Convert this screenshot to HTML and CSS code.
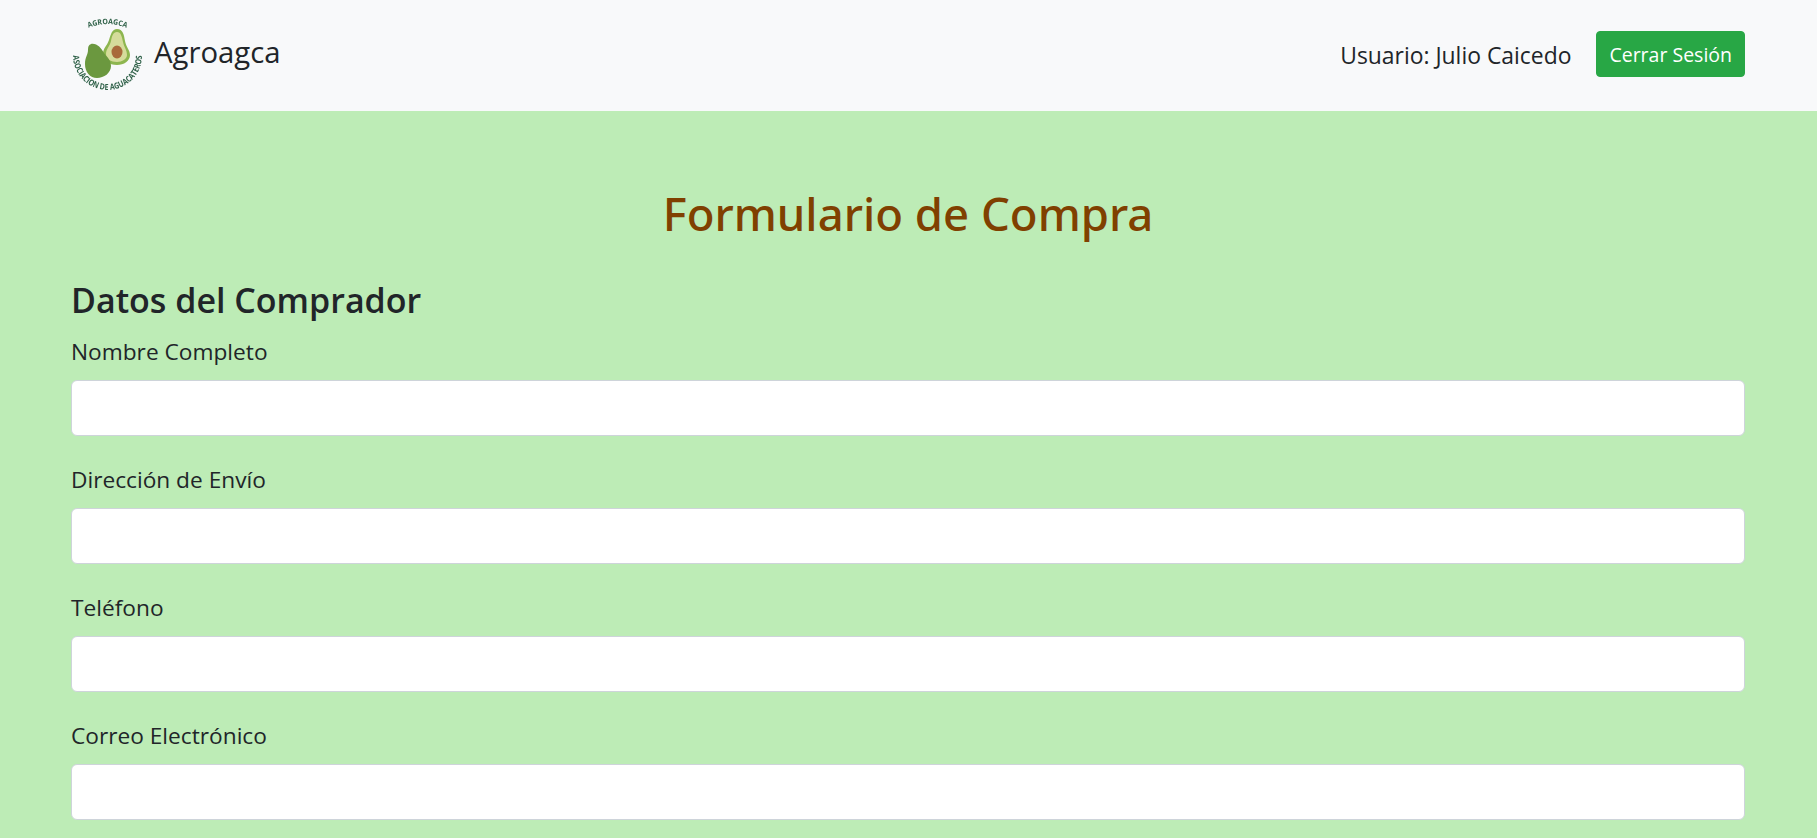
FILE: index.html
```html
<!DOCTYPE html>
<html lang="es">
<head>
    <meta charset="UTF-8">
    <meta name="viewport" content="width=device-width, initial-scale=1.0">
    <title>Formulario de Compra</title>
    <link rel="stylesheet" href="styles.css">
</head>
<body>
    <nav class="navbar">
        <a class="brand" href="#">
            <svg class="logo" viewBox="0 0 90 90" width="90" height="90">
                <defs>
                    <path id="arcTop" d="M26 19 A50 50 0 0 1 69 19"/>
                    <path id="arcBottom" d="M13 45.5 A34.5 34.5 0 0 0 82 45.5"/>
                </defs>
                <text class="logo-text"><textPath href="#arcTop" startOffset="50%" text-anchor="middle" textLength="39" lengthAdjust="spacingAndGlyphs">AGROAGCA</textPath></text>
                <text class="logo-text logo-text-low"><textPath href="#arcBottom" startOffset="50%" text-anchor="middle" textLength="108" lengthAdjust="spacingAndGlyphs">ASOCIACION DE AGUACATEROS</textPath></text>
                <path class="avo-back" d="M57 19 C63 19 64 25 65 31 C66 37 70 40 70 45 C70 51 64 55 57 55 C49 55 43 50 43 44 C43 38 47 36 49 30 C51 24 52 19 57 19 Z"/>
                <path class="avo-flesh" d="M57 22 C61 22 62 27 63 32 C64 37 67 40 67 45 C67 49 62 52 57 52 C51 52 46 49 46 44 C46 39 50 36 51 31 C52 26 53 22 57 22 Z"/>
                <ellipse class="avo-pit" cx="57" cy="42" rx="5.5" ry="6.5"/>
                <path class="avo-front" d="M31 34 C37 33 41 38 44 43 C47 47 51 50 51 56 C51 63 44 68 37 68 C30 68 25 62 25 54 C25 47 28 45 28 40 C28 36 29 35 31 34 Z"/>
            </svg>
            <span class="brand-name">Agroagca</span>
        </a>
        <div class="nav-right">
            <span class="user">Usuario: Julio Caicedo</span>
            <button class="btn-logout">Cerrar Sesión</button>
        </div>
    </nav>

    <div class="container">
        <h1>Formulario de Compra</h1>
        <h2>Datos del Comprador</h2>
        <form>
            <div class="form-group">
                <label for="nombre">Nombre Completo</label>
                <input type="text" id="nombre">
            </div>
            <div class="form-group">
                <label for="direccion">Dirección de Envío</label>
                <input type="text" id="direccion">
            </div>
            <div class="form-group">
                <label for="telefono">Teléfono</label>
                <input type="text" id="telefono">
            </div>
            <div class="form-group">
                <label for="correo">Correo Electrónico</label>
                <input type="text" id="correo">
            </div>
        </form>
    </div>
</body>
</html>
```

FILE: styles.css
```css
html, body {
    height: 100%;
}
body {
    margin: 0;
    font-family: "Open Sans", "Noto Sans", sans-serif;
    color: #212529;
    background: #bdecb6;
    overflow: hidden;
}
.navbar {
    display: flex;
    justify-content: space-between;
    align-items: center;
    height: 111px;
    padding: 0 72px 0 71px;
    background: #f8f9fa;
}
.brand {
    display: flex;
    align-items: center;
    color: #212529;
    text-decoration: none;
}
.logo {
    display: block;
    margin-left: -11px;
    margin-top: -1px;
    filter: blur(0.3px);
}
.logo-text {
    font-family: "Open Sans", sans-serif;
    font-size: 7.5px;
    font-weight: 700;
    fill: #2f6148;
}
.logo-text-low {
    font-size: 8.5px;
}
.avo-back {
    fill: #8db64f;
}
.avo-flesh {
    fill: #d5dc9b;
}
.avo-pit {
    fill: #a86a3b;
}
.avo-front {
    fill: #6b983f;
}
.brand-name {
    margin-left: 4px;
    margin-top: -7px;
    font-size: 29.3px;
}
.nav-right {
    display: flex;
    align-items: center;
    gap: 25px;
    margin-top: -3px;
}
.user {
    margin-top: 2px;
    font-size: 22.9px;
}
.btn-logout {
    height: 46px;
    padding: 0 12px;
    border: 1px solid #28a745;
    border-radius: 4px;
    background: #28a745;
    color: #fff;
    font-family: inherit;
    font-size: 19.5px;
}
.container {
    padding: 0 72px 0 71px;
}
h1 {
    margin: 72px 0 0;
    font-family: "Noto Sans", sans-serif;
    font-size: 45.5px;
    font-weight: 500;
    line-height: 60px;
    text-align: center;
    color: #804000;
}
h2 {
    margin: 32px 0 0;
    font-size: 34px;
    font-weight: 600;
    line-height: 50px;
}
form {
    margin-top: 7px;
}
.form-group {
    margin-bottom: 24px;
}
label {
    display: block;
    margin-bottom: 8px;
    font-size: 22.7px;
    line-height: 40px;
}
input {
    display: block;
    box-sizing: border-box;
    width: 100%;
    height: 56px;
    border: 1px solid #ced4da;
    border-radius: 6px;
    background: #fff;
}
```
